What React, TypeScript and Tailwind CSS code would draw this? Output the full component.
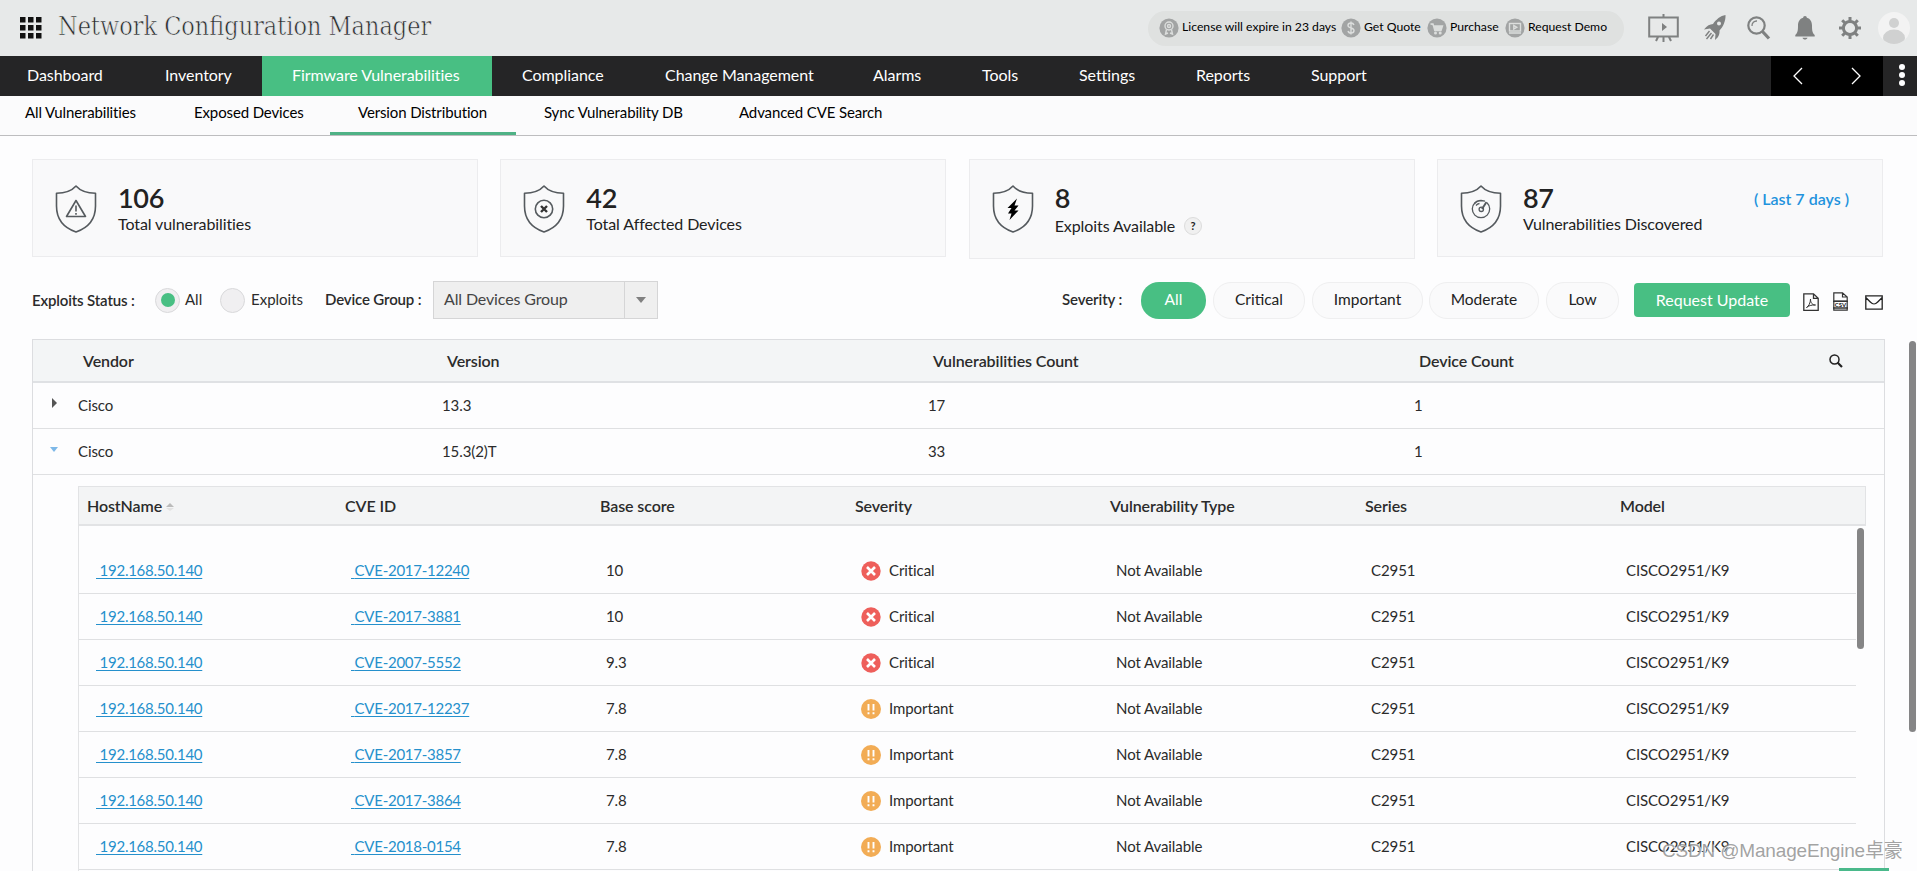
import React from "react";

const nav: [string, number, number][] = [
  ["Dashboard", 137, 27],
  ["Inventory", 125, 28],
  ["Firmware Vulnerabilities", 230, 30],
  ["Compliance", 143, 30],
  ["Change Management", 207, 30],
  ["Alarms", 110, 31],
  ["Tools", 97, 30],
  ["Settings", 117, 30],
  ["Reports", 115, 30],
  ["Support", 120, 30],
];

const subnav: [string, number, number][] = [
  ["All Vulnerabilities", 169, 25],
  ["Exposed Devices", 161, 25],
  ["Version Distribution", 186, 28],
  ["Sync Vulnerability DB", 195, 28],
  ["Advanced CVE Search", 200, 28],
];

const badges: [string, React.ReactNode, number][] = [
  [
    "License will expire in 23 days",
    <g key="a">
      <circle cx="10" cy="8" r="4" />
      <circle cx="10" cy="8" r="1.5" />
      <path d="M7.5 11.5 6.5 16l2.500-1M12.500 11.500 13.500 16 11 15" />
    </g>,
    182,
  ],
  [
    "Get Quote",
    <g key="b">
      <path d="M13 7c-.5-1.300-1.700-2-3-2-1.700 0-3 1-3 2.400C7 10.600 13 9 13 12.500 13 14 11.700 15 10 15c-1.500 0-2.700-.7-3-2M10 3.500v13" />
    </g>,
    86,
  ],
  [
    "Purchase",
    <g key="c">
      <path d="M3.500 6H6l1.800 6.500H14L15.500 8H7" fill="#dcdedd" />
      <circle cx="8.500" cy="15" r=".8" />
      <circle cx="13.200" cy="15" r=".8" />
    </g>,
    78,
  ],
  [
    "Request Demo",
    <g key="d">
      <rect x="4.500" y="5.500" width="11" height="7.500" />
      <path d="M8.800 7.500v3.500l3-1.700zM4 15h12" />
    </g>,
    110,
  ],
];

const hosts: [string, string, string][] = [
  ["CVE-2017-12240", "10", "Critical"],
  ["CVE-2017-3881", "10", "Critical"],
  ["CVE-2007-5552", "9.3", "Critical"],
  ["CVE-2017-12237", "7.8", "Important"],
  ["CVE-2017-3857", "7.8", "Important"],
  ["CVE-2017-3864", "7.8", "Important"],
  ["CVE-2018-0154", "7.8", "Important"],
];

function Shield({ kind }: { kind: string }) {
  return (
    <svg width="42" height="50" viewBox="0 0 42 50" fill="none" stroke="#555a5e" strokeWidth="1.600" className="shrink-0">
      <path d="M21 2c-4 4.500-9 7.200-19.500 7.200V22C1.500 34 8 43.500 21 48 34 43.500 40.500 34 40.500 22V9.200C30 9.200 25 6.500 21 2z" strokeLinejoin="round" />
      {kind === "warn" && (
        <g>
          <path d="M21 16.500 11.500 32.500h19z" strokeLinejoin="round" />
          <path d="M21 21.500v6M21 29v1.700" />
        </g>
      )}
      {kind === "x" && (
        <g>
          <circle cx="21" cy="25" r="8.700" />
          <path d="m18 22 6 6m0-6-6 6" strokeWidth="2.400" stroke="#333" />
        </g>
      )}
      {kind === "bolt" && (
        <path d="M25 14.500 15.500 24h4L16 29.500h3.500L17.500 36l9-9.500h-4l4-5H22.500z" fill="#000" stroke="none" />
      )}
      {kind === "gauge" && (
        <g strokeWidth="1.300">
          <path d="M27 18.700A8.700 8.700 0 1 1 15 18.700" />
          <path d="M14.500 19.500c1.500-2 3.500-3 6.500-3l4 .7M16 21.500c1-1.200 2-1.800 3.500-2" />
          <path d="m26.500 18-4.500 7" strokeWidth="2" />
          <circle cx="21.300" cy="25.300" r="2.200" />
        </g>
      )}
    </svg>
  );
}

function Stat({ kind, value, label, children, tall }: { kind: string; value: string; label: string; children?: React.ReactNode; tall?: boolean }) {
  return (
    <div className={`flex w-[446px] border border-[#ececee] bg-[#f9f9fa] pl-[22px] pt-[24px] ${tall ? "h-[100px]" : "h-[98px]"}`}>
      <Shield kind={kind} />
      <div className="ml-[21px] flex-1">
        <div className="h-[28px] text-[27px] font-semibold leading-[28px] tracking-[-0.3px] text-[#222]">{value}</div>
        <div className={`flex items-center text-[16px] leading-[24px] tracking-[-0.09px] text-[#222] ${tall ? "mt-[2px]" : ""}`}>
          {label}
          {tall && (
            <span className="ml-[9px] flex h-[18px] w-[18px] items-center justify-center rounded-full border border-[#dcdcdc] bg-[#f0f0f0] text-[11px] font-bold">?</span>
          )}
        </div>
      </div>
      {children}
    </div>
  );
}

function Pill({ text, className }: { text: string; className: string }) {
  return (
    <div className={`flex h-[37px] items-center justify-center rounded-[18px] border border-[#efeff0] bg-[#fafafb] pb-px text-[15.500px] text-[#222] ${className}`}>{text}</div>
  );
}

function SeverityIcon({ level }: { level: string }) {
  return level === "Critical" ? (
    <svg width="20" height="20" viewBox="0 0 20 20">
      <circle cx="10" cy="10" r="9.700" fill="#ee5f5b" />
      <path d="m6 6 8 8m0-8-8 8" stroke="#fff" strokeWidth="2.600" />
    </svg>
  ) : (
    <svg width="20" height="20" viewBox="0 0 20 20">
      <circle cx="10" cy="10" r="10" fill="#f2ac55" />
      <path d="M7.500 5v6.500M12.500 5v6.500M7.500 13.300v2M12.500 13.300v2" stroke="#fff" strokeWidth="1.900" />
    </svg>
  );
}

export default function App() {
  return (
    <div className="relative flex h-[871px] w-[1917px] flex-col overflow-hidden bg-[#fdfdfe] font-['Lato',sans-serif] text-[#2b2b2b]">
      <header className="flex h-[56px] shrink-0 items-center bg-[#e7e9e9]">
        <svg width="22" height="22" viewBox="0 0 22 22" className="ml-[20px] shrink-0">
          {[0, 8, 16].map((y) => [0, 8, 16].map((x) => <rect key={`${x}-${y}`} x={x} y={y} width="5.500" height="5.500" fill="#111" />))}
        </svg>
        <div className="ml-[16px] w-[390px] shrink-0">
          <h1 className="origin-left scale-x-[0.96] whitespace-nowrap pb-[5px] font-['DejaVu_Serif_Condensed','DejaVu_Serif',serif] text-[26px] leading-[32px] text-[#26282a] [-webkit-text-stroke:0.6px_#e7e9e9]">
            Network Configuration Manager
          </h1>
        </div>
        <div className="ml-auto flex h-[35px] w-[476px] shrink-0 items-center rounded-full bg-[#dfe1e0] pl-[11px]">
          {badges.map(([label, icon, w]) => (
            <div key={label} className="flex shrink-0 items-center" style={{ width: w }}>
              <svg width="20" height="20" viewBox="0 0 20 20" fill="none" stroke="#dcdedd" strokeWidth="1.400" className="shrink-0">
                <circle cx="10" cy="10" r="9.600" fill="#a2a4a4" stroke="none" />
                {icon}
              </svg>
              <span className="ml-[3px] whitespace-nowrap pb-px text-[12.200px] text-black">{label}</span>
            </div>
          ))}
        </div>
        <div className="ml-[24px] flex w-[269px] shrink-0 items-center">
          <svg width="32" height="28" viewBox="0 0 32 28" fill="none" stroke="#7f8181" strokeWidth="2">
            <path d="M1.200 3.500h28.600v19H1.200zM15.500 0v3M15.500 22v6M10 23l-2 4M21 23l2 4" />
            <path d="M14 9v8l5-4z" fill="#7f8181" stroke="none" />
          </svg>
          <svg width="24" height="26" viewBox="0 0 24 26" className="ml-[23px]" fill="#7f8181">
            <path fillRule="evenodd" d="M22.500 0c-5 .8-9.500 4.500-12.500 9-3 .2-6 1.500-9 5.500l6-1 5.500 5.500-.5 6c4-3 4.800-6.500 4.500-9.500C20 12 22.800 6 22.500 0zM16 6.500a2 2 0 1 1 0 4 2 2 0 0 1 0-4z" />
            <path d="m6.500 16-4 5M8.500 18l-5 6M10.500 19.500l-3 4.500" stroke="#7f8181" strokeWidth="1.400" />
          </svg>
          <svg width="24" height="25" viewBox="0 0 24 25" className="ml-[20px]" fill="none" stroke="#7f8181">
            <circle cx="9.500" cy="9.500" r="8.200" strokeWidth="2.200" />
            <path d="M5 10a4.600 4.600 0 0 1 5-5" strokeWidth="1.300" />
            <path d="m15.500 15.500 6.500 7" strokeWidth="3.200" />
          </svg>
          <svg width="20" height="24" viewBox="0 0 20 24" className="ml-[24px]" fill="#7f8181">
            <path d="M10 0c1.200 0 1.800.8 1.800 1.800C15.500 2.700 17 6 17 9.500c0 5.500.5 7.500 2.700 9.500v1.500H.3V19C2.500 17 3 15 3 9.500 3 6 4.500 2.700 8.200 1.800 8.200.8 8.800 0 10 0zM7.500 21.700h5c-.5 2.400-4.500 2.400-5 0z" />
          </svg>
          <svg width="22" height="22" viewBox="0 0 22 22" className="ml-[24px]" fill="none" stroke="#7f8181">
            <circle cx="11" cy="11" r="6.600" strokeWidth="3" />
            <path d="M11 0v4M11 18v4M0 11h4M18 11h4M3.200 3.200 6 6M16 16l2.800 2.800M3.200 18.800 6 16M16 6l2.800-2.800" strokeWidth="3" />
          </svg>
          <svg width="32" height="32" viewBox="0 0 32 32" className="ml-[17px]">
            <clipPath id="av"><circle cx="16" cy="16" r="16" /></clipPath>
            <circle cx="16" cy="16" r="16" fill="#f3f3f3" />
            <g clipPath="url(#av)" fill="#d0d1d1">
              <circle cx="16" cy="11" r="5" />
              <ellipse cx="16" cy="26" rx="11" ry="8.500" />
            </g>
          </svg>
        </div>
      </header>

      <nav className="flex h-[40px] shrink-0 bg-[#252526] text-[16px] text-white">
        {nav.map(([t, w, p], i) => (
          <div key={t} className={`flex shrink-0 items-center whitespace-nowrap pb-[2px] tracking-[-0.05px] ${i === 2 ? "bg-[#48bf83]" : ""}`} style={{ width: w, paddingLeft: p }}>
            {t}
          </div>
        ))}
        <div className="ml-auto flex w-[112px] items-center bg-black">
          <svg width="10" height="18" viewBox="0 0 10 18" className="ml-[22px]" fill="none" stroke="#fff" strokeWidth="1.300"><path d="M9 1 1 9l8 8" /></svg>
          <svg width="10" height="18" viewBox="0 0 10 18" className="ml-[48px]" fill="none" stroke="#fff" strokeWidth="1.300"><path d="m1 1 8 8-8 8" /></svg>
        </div>
        <div className="flex w-[34px] flex-col items-center justify-center gap-[2px] pl-[3px] pb-[2px]">
          {[0, 1, 2].map((i) => <span key={i} className="h-[6px] w-[6px] rounded-full bg-white" />)}
        </div>
      </nav>

      <nav className="flex h-[40px] shrink-0 border-b border-[#bdbdbf] bg-[#fbfbfc] text-[15px] tracking-[-0.13px] text-black">
        {subnav.map(([t, w, p], i) => (
          <div key={t} className={`h-[39px] shrink-0 whitespace-nowrap pt-[5px] leading-[23px] ${i === 2 ? "border-b-[3px] border-[#4fb286]" : ""}`} style={{ width: w, paddingLeft: p }}>
            {t}
          </div>
        ))}
      </nav>

      <main className="flex flex-1 flex-col pl-[32px]">
        <section className="mt-[23px] flex h-[100px] w-[1851px] shrink-0 items-start justify-between">
          <Stat kind="warn" value="106" label="Total vulnerabilities" />
          <Stat kind="x" value="42" label="Total Affected Devices" />
          <Stat kind="bolt" value="8" label="Exploits Available" tall />
          <Stat kind="gauge" value="87" label="Vulnerabilities Discovered">
            <div className="mr-[33px] mt-[3px] text-[16px] font-semibold text-[#1f93dd]">( Last 7 days )</div>
          </Stat>
        </section>

        <section className="mt-[22px] flex h-[38px] w-[1851px] shrink-0 items-center text-[15px]">
          <span className="w-[123px] font-semibold tracking-[-0.15px]">Exploits Status :</span>
          <span className="flex h-[25px] w-[25px] items-center justify-center rounded-full border border-[#d9d9db] bg-[#f0eff1]">
            <span className="h-[14px] w-[14px] rounded-full bg-[#48bf83]" />
          </span>
          <span className="ml-[5px] w-[35px] pb-px">All</span>
          <span className="h-[25px] w-[25px] rounded-full border border-[#d9d9db] bg-[#f0eff1]" />
          <span className="ml-[6px] w-[74px] pb-px">Exploits</span>
          <span className="w-[108px] pb-px font-semibold tracking-[-0.15px]">Device Group :</span>
          <div className="flex h-[38px] w-[225px] border border-[#d5d5d6] bg-[#efefef]">
            <span className="flex w-[191px] items-center border-r border-[#d5d5d6] pb-[2px] pl-[10px] text-[16px] tracking-[-0.13px] text-[#444]">All Devices Group</span>
            <span className="flex flex-1 items-center justify-center">
              <span className="border-x-[5px] border-t-[6px] border-x-transparent border-t-[#808080]" />
            </span>
          </div>
          <span className="ml-auto w-[79px] pb-[2px] font-semibold tracking-[-0.1px]">Severity :</span>
          <div className="flex h-[37px] w-[65px] items-center justify-center rounded-[18px] bg-[#48bf83] pb-px text-[15.500px] text-white">All</div>
          <Pill text="Critical" className="ml-[7px] w-[92px]" />
          <Pill text="Important" className="ml-[7px] w-[111px]" />
          <Pill text="Moderate" className="ml-[6px] w-[110px]" />
          <Pill text="Low" className="ml-[7px] w-[73px]" />
          <button className="ml-[15px] h-[34px] w-[156px] rounded-[4px] bg-[#48bf83] text-[16px] text-white">Request Update</button>
          <svg width="16" height="18" viewBox="0 0 16 18" className="ml-[13px] mt-[3px]" fill="none" stroke="#333" strokeWidth="1.300">
            <path d="M.8.8h9.700l4.700 4.500v12H.8zM10.500.8v4.500h4.700" />
            <path d="M3.500 14.500c2-1 4-4.500 4-8.500 0 4 2 6 5 6-4-.3-7 .8-9 2.500z" strokeWidth="1" />
          </svg>
          <svg width="15" height="19" viewBox="0 0 15 19" className="ml-[14px] mt-[2px]" fill="none" stroke="#333" strokeWidth="1.200">
            <path d="M.8 9V.8h8.700L14.200 5v4M9.500.8V5h4.700M.8 9v9.200h13.400V9z" />
            <path d="M0 9.300h15M0 16h15" strokeWidth="1.300" />
            <text x="7.500" y="15" fontSize="6" fontWeight="bold" textAnchor="middle" fill="#222" stroke="none" fontFamily="Lato">CSV</text>
          </svg>
          <svg width="18" height="15" viewBox="0 0 18 15" className="ml-[17px] mt-[5px]" fill="none" stroke="#222" strokeWidth="1.300">
            <path d="M.8.8h16.400v13.400H.8zM.8 2.500l4.500 4.500c2.800 2.700 4.600 2.700 7.400 0l4.500-4.500" />
          </svg>
        </section>

        <section className="mt-[20px] flex w-[1853px] flex-1 flex-col border-x border-t border-[#dcdde0]">
          <div className="flex h-[43px] shrink-0 items-center border-b-2 border-[#dfe1e4] bg-[#f3f5f6] pl-[50px] text-[16px] font-semibold tracking-[-0.1px]">
            <span className="w-[364px]">Vendor</span>
            <span className="w-[486px]">Version</span>
            <span className="w-[486px]">Vulnerabilities Count</span>
            <span>Device Count</span>
            <svg width="14" height="14" viewBox="0 0 14 14" className="ml-auto mr-[41px]" fill="none" stroke="#222">
              <circle cx="5.500" cy="5.500" r="4.500" strokeWidth="1.500" />
              <path d="m8.500 8.500 4.500 4.500" strokeWidth="2.200" />
            </svg>
          </div>
          {[["13.3", "17"], ["15.3(2)T", "33"]].map(([v, c], i) => (
            <div key={v} className="flex h-[46px] shrink-0 items-center border-b border-[#dfe0e2] text-[15px] tracking-[-0.1px]">
              <span className="flex w-[45px] pb-[5px] pl-[17px]">
                {i === 0 ? (
                  <span className="ml-[2px] border-y-[5px] border-l-[5px] border-y-transparent border-l-[#555]" />
                ) : (
                  <span className="border-x-[4px] border-t-[5px] border-x-transparent border-t-[#7db8e8]" />
                )}
              </span>
              <span className="w-[364px]">Cisco</span>
              <span className="w-[486px]">{v}</span>
              <span className="w-[486px]">{c}</span>
              <span>1</span>
            </div>
          ))}

          <div className="ml-[45px] mt-[11px] flex w-[1788px] flex-1 flex-col">
            <div className="flex h-[40px] shrink-0 items-center border border-b-2 border-[#e2e3e5] bg-[#f3f4f5] pl-[8px] text-[16px] font-semibold tracking-[-0.1px]">
              <span className="flex w-[258px] items-center">
                HostName
                <span className="ml-[4px] mt-[3px] flex flex-col gap-px">
                  <span className="border-x-[4px] border-b-[4px] border-x-transparent border-b-[#bbb]" />
                  <span className="border-x-[4px] border-t-[3px] border-x-transparent border-t-[#e2e2e2]" />
                </span>
              </span>
              <span className="w-[255px]">CVE ID</span>
              <span className="w-[255px]">Base score</span>
              <span className="w-[255px]">Severity</span>
              <span className="w-[255px]">Vulnerability Type</span>
              <span className="w-[255px]">Series</span>
              <span>Model</span>
            </div>
            <div className="flex flex-1 border-l border-[#e2e3e5]">
              <div className="w-[1777px] pt-[22px]">
                {hosts.map(([cve, score, sev]) => (
                  <div key={cve} className="flex h-[46px] items-center border-b border-[#dfe0e2] pl-[17px] text-[15px] tracking-[-0.08px]">
                    <span className="w-[255px] tracking-[-0.26px]"><a className="whitespace-pre text-[#2590cc] underline underline-offset-2"> 192.168.50.140</a></span>
                    <span className="w-[255px] tracking-[-0.26px]"><a className="whitespace-pre text-[#2590cc] underline underline-offset-2"> {cve}</a></span>
                    <span className="w-[255px]">{score}</span>
                    <span className="flex w-[255px] items-center gap-[8px]"><SeverityIcon level={sev} />{sev}</span>
                    <span className="w-[255px]">Not Available</span>
                    <span className="w-[255px]">C2951</span>
                    <span>CISCO2951/K9</span>
                  </div>
                ))}
              </div>
              <div className="ml-px mt-[2px] h-[121px] w-[7px] rounded-full bg-[#858586]" />
            </div>
          </div>
        </section>
      </main>

      <div className="absolute left-[1909px] top-[341px] h-[391px] w-[7px] rounded-full bg-[#858586]" />
      <div className="absolute left-[1839px] top-[868px] h-[3px] w-[50px] bg-[#4ab98b]" />
      <div className="absolute left-[1662px] top-[838px] whitespace-nowrap font-['Liberation_Sans','Noto_Sans_CJK_SC',sans-serif] text-[19px] leading-[26px] tracking-[-0.180px] text-[#8a8a8acc] [text-shadow:1px_1px_1px_#fff]">
        CSDN @ManageEngine卓豪
      </div>
    </div>
  );
}
